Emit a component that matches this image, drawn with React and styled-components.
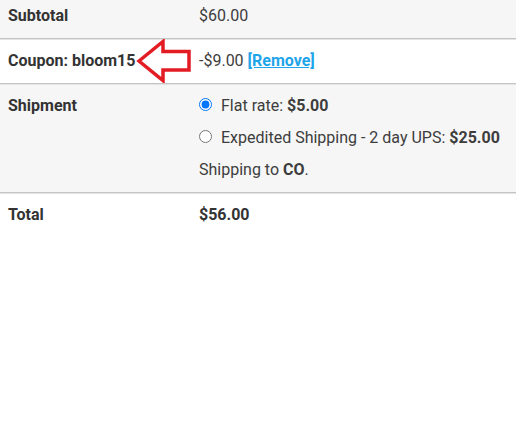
import React from "react";
import styled, { createGlobalStyle } from "styled-components";

const Global = createGlobalStyle`
  html, body { margin: 0; padding: 0; background: #fff; }
  body { font-family: Roboto, "Liberation Sans", Arial, sans-serif; font-size: 16px; color: #333; }
`;

const Table = styled.div`
  width: 516px;
  margin-top: -6px;
  display: grid;
  grid-template-columns: 191px 1fr;
  position: relative;
`;

const Row = styled.div`
  display: contents;
`;

const Cell = styled.div`
  padding: 10px 8px;
  line-height: 24px;
  background: ${(p) => (p.$shade ? "#f6f6f6" : "#fff")};
  border-top: ${(p) => (p.$first ? "none" : "1px solid #c4c4c4")};
  box-shadow: ${(p) => (p.$first ? "none" : "inset 0 1px 0 #e4e4e4")};
  font-weight: ${(p) => (p.$bold ? 700 : 400)};
  color: ${(p) => (p.$bold ? "#333" : "#3d3d3d")};
  position: relative;
`;

const Label = styled(Cell)`
  font-weight: 700;
  color: #333;
`;

const Option = styled.label`
  display: flex;
  align-items: center;
  line-height: 24px;
  margin-bottom: 8px;
`;

const Radio = styled.input`
  margin: 0 9px 0 0;
  width: 13px;
  height: 13px;
  accent-color: #0075ff;
  position: relative;
  top: -2px;
`;

const Line = styled.div`
  line-height: 24px;
`;

const RemoveLink = styled.a`
  color: #1ea4e9;
  font-weight: 700;
  text-decoration: underline;
  margin-left: 4px;
  cursor: pointer;
`;

const ArrowSvg = styled.svg`
  position: absolute;
  left: 136px;
  top: 0;
  pointer-events: none;
`;

function Arrow() {
  return (
    <ArrowSvg width="58" height="46" viewBox="0 0 58 46">
      <polygon
        points="3,22 27,2.5 27,12.5 53,12.5 53,31 27,31 27,41.5"
        fill="#fff"
        stroke="#e31b23"
        strokeWidth="3.5"
        strokeLinejoin="miter"
      />
    </ArrowSvg>
  );
}

export default function App() {
  return (
    <>
      <Global />
      <Table>
        <Row>
          <Label $shade $first>Subtotal</Label>
          <Cell $shade $first>$60.00</Cell>
        </Row>
        <Row>
          <Label>
            Coupon: bloom15
            <Arrow />
          </Label>
          <Cell>
            -$9.00<RemoveLink>[Remove]</RemoveLink>
          </Cell>
        </Row>
        <Row>
          <Label $shade>Shipment</Label>
          <Cell $shade>
            <Option>
              <Radio type="radio" name="ship" defaultChecked />
              <span>
                Flat rate: <b>$5.00</b>
              </span>
            </Option>
            <Option>
              <Radio type="radio" name="ship" />
              <span>
                Expedited Shipping - 2 day UPS: <b>$25.00</b>
              </span>
            </Option>
            <Line>
              Shipping to <b>CO</b>.
            </Line>
          </Cell>
        </Row>
        <Row>
          <Label>Total</Label>
          <Cell $bold>$56.00</Cell>
        </Row>
      </Table>
    </>
  );
}
